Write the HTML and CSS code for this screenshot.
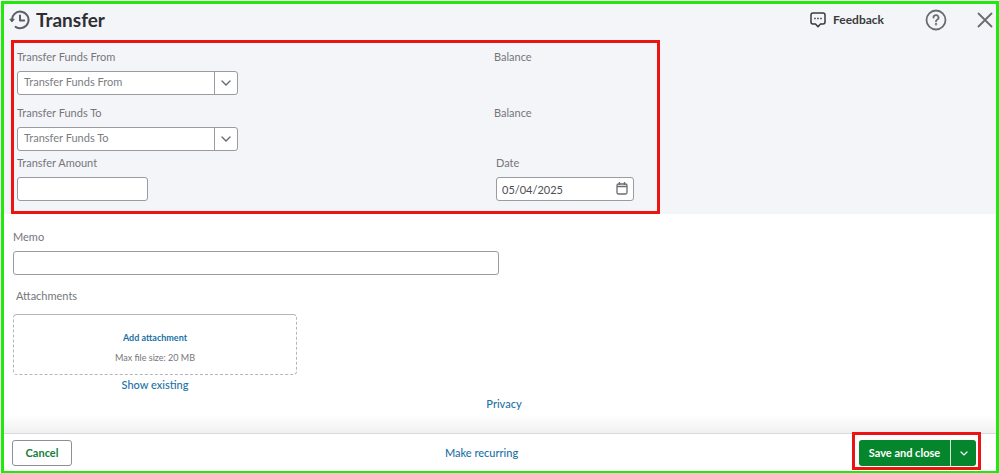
FILE: index.html
```html
<!DOCTYPE html>
<html lang="en">
<head>
    <meta charset="UTF-8">
    <meta name="viewport" content="width=device-width, initial-scale=1.0">
    <title>Transfer</title>
    <link rel="stylesheet" href="styles.css">
</head>
<body>
    <form class="page">
        <div class="top">
            <header class="header">
                <button type="button" class="icon-button" aria-label="Recent transfers">
                    <svg width="22" height="20" viewBox="0 0 22 20" fill="none" stroke="#5b5e66" stroke-width="2" stroke-linecap="round" stroke-linejoin="round">
                        <path d="M3 11a8.3 8.3 0 1 1 3.6 5.8"/>
                        <path d="M11 5.500v5h4.200"/>
                        <path d="M1.200 9.200h4l-2 2.400z" fill="#5b5e66" stroke-width="1"/>
                    </svg>
                </button>
                <h1>Transfer</h1>
                <button type="button" class="feedback">
                    <svg width="16" height="16" viewBox="0 0 16 16" fill="none" stroke="#393a3d" stroke-width="1.500" stroke-linejoin="round">
                        <path d="M3 1h10a2 2 0 0 1 2 2v7a2 2 0 0 1-2 2h-2.500L8 14.700 5.500 12H3a2 2 0 0 1-2-2V3a2 2 0 0 1 2-2z"/>
                        <path d="M4.200 6.500h1.500M7.200 6.500h1.500M10.200 6.500h1.500"/>
                    </svg>
                    Feedback
                </button>
                <button type="button" class="icon-button help" aria-label="Help">
                    <svg width="22" height="22" viewBox="0 0 22 22" fill="none" stroke="#6b6c72" stroke-width="1.800" stroke-linecap="round">
                        <circle cx="11" cy="11" r="9.500"/>
                        <path d="M8.500 8.600a2.500 2.500 0 1 1 3.600 2.200c-.8.400-1.100.8-1.100 1.600"/>
                        <circle cx="11" cy="15.200" r=".4" fill="#6b6c72"/>
                    </svg>
                </button>
                <button type="button" class="icon-button" aria-label="Close">
                    <svg width="16" height="16" viewBox="0 0 16 16" fill="none" stroke="#6b6c72" stroke-width="1.800" stroke-linecap="round">
                        <path d="M1.500 1.500l13 13M14.500 1.500l-13 13"/>
                    </svg>
                </button>
            </header>

            <section class="accounts">
                <div class="row">
                    <div class="field">
                        <label for="from">Transfer Funds From</label>
                        <div class="dropdown">
                            <select id="from">
                                <option value="">Transfer Funds From</option>
                            </select>
                            <span class="arrow">
                                <svg width="10" height="6" viewBox="0 0 10 6" fill="none" stroke="#6b6c72" stroke-width="1.400" stroke-linecap="round"><path d="M1 1l4 4 4-4"/></svg>
                            </span>
                        </div>
                    </div>
                    <span class="balance">Balance</span>
                </div>
                <div class="row">
                    <div class="field">
                        <label for="to">Transfer Funds To</label>
                        <div class="dropdown">
                            <select id="to">
                                <option value="">Transfer Funds To</option>
                            </select>
                            <span class="arrow">
                                <svg width="10" height="6" viewBox="0 0 10 6" fill="none" stroke="#6b6c72" stroke-width="1.400" stroke-linecap="round"><path d="M1 1l4 4 4-4"/></svg>
                            </span>
                        </div>
                    </div>
                    <span class="balance">Balance</span>
                </div>
                <div class="row amount-row">
                    <div class="field">
                        <label for="amount">Transfer Amount</label>
                        <input type="text" id="amount" class="amount">
                    </div>
                    <div class="field date-field">
                        <label for="date">Date</label>
                        <div class="date">
                            <input type="text" id="date" value="05/04/2025">
                            <svg width="12" height="13" viewBox="0 0 12 13" fill="none" stroke="#6b6c72" stroke-width="1.300">
                                <rect x="1" y="2" width="10" height="10" rx="1.500"/>
                                <path d="M1 4.500h10M3.500 0v3M8.500 0v3"/>
                            </svg>
                        </div>
                    </div>
                </div>
            </section>
        </div>

        <main class="details">
            <div class="field">
                <label for="memo">Memo</label>
                <input type="text" id="memo" class="memo">
            </div>
            <div class="attachments">
                <h2>Attachments</h2>
                <div class="dropzone">
                    <a href="#" class="add">Add attachment</a>
                    <span>Max file size: 20 MB</span>
                </div>
                <a href="#">Show existing</a>
            </div>
            <a href="#" class="privacy">Privacy</a>
        </main>

        <footer class="footer">
            <button type="button" class="cancel">Cancel</button>
            <a href="#" class="recurring">Make recurring</a>
            <div class="save-box">
                <button type="submit" class="save">Save and close</button>
                <button type="button" class="save-more" aria-label="More save options">
                    <svg width="8" height="5" viewBox="0 0 8 5" fill="none" stroke="#fff" stroke-width="1.200" stroke-linecap="round"><path d="M1 1l3 3 3-3"/></svg>
                </button>
            </div>
        </footer>
    </form>
</body>
</html>
```
FILE: styles.css
```css
* {
    box-sizing: border-box;
}

body {
    margin: 0;
    padding: 1px 0 0 1px;
    font-family: Lato, "Open Sans", sans-serif;
    font-size: 11px;
    line-height: 16px;
    color: #74767c;
    background: #fff;
}

button, input, select {
    font: inherit;
    margin: 0;
}

button {
    padding: 0;
    border: none;
    background: none;
    cursor: pointer;
}

a {
    color: #1a72a5;
    font-weight: 500;
    text-decoration: none;
}

a:hover {
    text-decoration: underline;
}

svg {
    display: block;
}

.page {
    display: flex;
    flex-direction: column;
    min-height: calc(100vh - 1px);
    border: 3px solid #1fea0a;
    border-bottom-width: 2px;
}

.top {
    background: #f4f5f8;
}

.header {
    display: flex;
    align-items: center;
    height: 36px;
    padding: 0 3px 5px 5px;
}

.header h1 {
    flex: 1;
    margin: 0 0 0 5px;
    font-size: 19px;
    line-height: 24px;
    font-weight: 700;
    color: #2d2f33;
}

.feedback {
    display: flex;
    align-items: center;
    gap: 7px;
    font-size: 12px;
    font-weight: 700;
    color: #393a3d;
}

.help {
    margin: 0 30px 0 41px;
}

.accounts {
    max-width: 649px;
    margin-left: 7px;
    padding: 6px 0 10px 3px;
    border: 3px solid #ec1313;
}

.row {
    display: grid;
    grid-template-columns: 477px 1fr;
    margin-bottom: 10px;
}

.amount-row {
    margin: -6px 0 0;
}

.date-field {
    padding-left: 2px;
}

.field label {
    display: block;
    margin-bottom: 6px;
}

.field input, .field select {
    display: block;
    height: 24px;
    padding: 0 5px;
    border: 1px solid #9a9ca2;
    border-radius: 3px;
    color: #4c4e54;
    background: #fff;
}

.dropdown {
    position: relative;
    width: 221px;
}

.field select {
    width: 100%;
    padding: 0 6px 2px;
    appearance: none;
    color: #7b7d83;
}

.arrow {
    position: absolute;
    top: 1px;
    right: 1px;
    bottom: 1px;
    display: flex;
    align-items: center;
    justify-content: center;
    width: 23px;
    border-left: 1px solid #9a9ca2;
    pointer-events: none;
}

.field .amount {
    width: 131px;
}

.date {
    position: relative;
    width: 138px;
}

.date input {
    width: 100%;
}

.date svg {
    position: absolute;
    top: 5px;
    right: 6px;
}

.details {
    display: flex;
    flex: 1;
    flex-direction: column;
    align-items: flex-start;
    padding: 15px 9px 0;
    background: linear-gradient(to top, #f0f0f0, #fff 18px);
}

.field .memo {
    width: 486px;
    max-width: 100%;
}

.attachments {
    display: flex;
    flex-direction: column;
    align-items: center;
    width: 284px;
    margin-top: 13px;
}

.attachments h2 {
    align-self: flex-start;
    margin: 0 0 10px 3px;
    font-size: 11px;
    line-height: 16px;
    font-weight: 400;
}

.dropzone {
    display: flex;
    flex-direction: column;
    align-items: center;
    gap: 4px;
    width: 100%;
    height: 61px;
    margin-bottom: 2px;
    padding-top: 15px;
    border: 1px dashed #b4b6bb;
    border-top: 1px solid #b4b6bb;
    border-radius: 4px;
    font-size: 9px;
}

.dropzone .add {
    font-weight: 700;
}

.privacy {
    align-self: center;
    margin-top: 3px;
    padding-left: 8px;
}

.footer {
    display: grid;
    grid-template-columns: 1fr auto 1fr;
    align-items: start;
    height: 38px;
    padding: 0 15px 0 8px;
    border-top: 1px solid #d8dadd;
}

.cancel {
    width: 60px;
    height: 26px;
    margin-top: 6px;
    border: 1px solid #8d9096;
    border-radius: 3px;
    font-weight: 700;
    color: #13803a;
    background: #fff;
}

.recurring {
    margin-top: 11px;
    padding-right: 30px;
}

.save-box {
    display: flex;
    justify-self: end;
    margin-top: -2px;
    padding: 5px 2px 1px 4px;
    border: 3px solid #ec1313;
}

.save, .save-more {
    height: 26px;
    color: #fff;
    background: #05862c;
}

.save {
    width: 91px;
    border-radius: 3px 0 0 3px;
    font-weight: 700;
}

.save-more {
    display: flex;
    align-items: center;
    justify-content: center;
    width: 26px;
    border-left: 1px solid #d5ead9;
    border-radius: 0 3px 3px 0;
}
```
